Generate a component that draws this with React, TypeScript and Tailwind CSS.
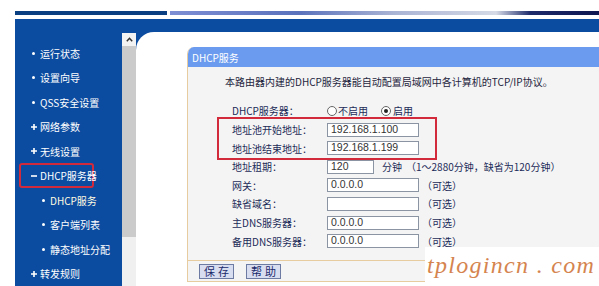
import React from "react";

// ###  Router admin page: DHCP service  ###

type NavItem = {
  label: string;
  mark: "dot" | "plus" | "minus";
  sub?: boolean;
  active?: boolean;
  boxed?: boolean;
};

const navItems: NavItem[] = [
  { label: "运行状态", mark: "dot" },
  { label: "设置向导", mark: "dot" },
  { label: "QSS安全设置", mark: "dot" },
  { label: "网络参数", mark: "plus" },
  { label: "无线设置", mark: "plus" },
  { label: "DHCP服务器", mark: "minus", boxed: true },
  { label: "DHCP服务", mark: "dot", sub: true, active: true },
  { label: "客户端列表", mark: "dot", sub: true },
  { label: "静态地址分配", mark: "dot", sub: true },
  { label: "转发规则", mark: "plus" },
];

function Mark({ type }: { type: NavItem["mark"] }) {
  return (
    <span className="inline-flex w-[7px] justify-center items-center shrink-0">
      {type === "dot" && <span className="w-[3px] h-[3px] rounded-full bg-white" />}
      {type === "plus" && (
        <svg width="6" height="6" viewBox="0 0 6 6">
          <path d="M3 0V6M0 3H6" stroke="#fff" strokeWidth="1.6" />
        </svg>
      )}
      {type === "minus" && (
        <svg width="6" height="6" viewBox="0 0 6 6">
          <path d="M0 3H6" stroke="#fff" strokeWidth="1.6" />
        </svg>
      )}
    </span>
  );
}

function Sidebar() {
  return (
    <nav className="w-[107px] shrink-0 pt-[22px] flex flex-col">
      {navItems.map((item) => (
        <div
          key={item.label}
          className={
            item.boxed
              ? "ml-[4px] w-[75px] h-[25px] pl-[9px] flex items-center border-2 border-[#d22a3a] rounded-[3px]"
              : item.sub
              ? "h-[25px] pl-[25px] flex items-center"
              : "h-[25px] pl-[15px] flex items-center"
          }
        >
          <Mark type={item.mark} />
          <span
            className={
              item.active
                ? "ml-[3px] text-[10px] text-[#fffbe0] whitespace-nowrap"
                : "ml-[3px] text-[10px] text-white whitespace-nowrap"
            }
          >
            {item.label}
          </span>
        </div>
      ))}
    </nav>
  );
}

function Scrollbar() {
  return (
    <div className="w-[14px] shrink-0 flex flex-col mt-[1px]">
      <div className="h-[13px] bg-[#f3f3f3] flex items-center justify-center">
        <svg width="7" height="5" viewBox="0 0 7 5">
          <path d="M0.8 4.2L3.5 1.3L6.2 4.2" stroke="#333" strokeWidth="1.5" fill="none" />
        </svg>
      </div>
      <div className="h-[191px] bg-[#cbcbcb]" />
      <div className="flex-1 bg-[#f0f0f0]" />
    </div>
  );
}

function TextInput({ value, wide = true }: { value: string; wide?: boolean }) {
  return (
    <span
      className={
        (wide ? "w-[92px]" : "w-[47px]") +
        " h-[14px] shrink-0 bg-white border border-[#8a94a3] pl-[3px] flex items-center text-[10.5px] text-[#333] font-['Liberation_Sans',sans-serif]"
      }
    >
      {value}
    </span>
  );
}

function Radio({ checked }: { checked?: boolean }) {
  return (
    <span className="w-[10px] h-[10px] shrink-0 rounded-full border border-[#666] bg-white flex items-center justify-center">
      {checked && <span className="w-[4px] h-[4px] rounded-full bg-[#222]" />}
    </span>
  );
}

function Row({ label, children }: { label: string; children: React.ReactNode }) {
  return (
    <div className="h-[18.6px] flex items-center">
      <span className="w-[95px] shrink-0 text-[10px] text-[#1c2b58] whitespace-nowrap">{label}</span>
      {children}
    </div>
  );
}

const Optional = () => <span className="ml-[3px] text-[10px] text-[#1c2b58] whitespace-nowrap">（可选）</span>;

function DhcpPanel() {
  return (
    <div className="w-[430px] border-l border-b border-[#e6cc9f] rounded-tl-[7px] overflow-hidden">
      <div className="h-[20px] bg-[#6b9bee] pl-[4px] flex items-center text-[10px] text-white">DHCP服务</div>

      <div className="h-[193px] bg-[#f4f4f4] pt-[7px]">
        <p className="pl-[37px] h-[16px] leading-[16px] text-[10px] text-[#1f2640] whitespace-nowrap">
          本路由器内建的DHCP服务器能自动配置局域网中各计算机的TCP/IP协议。
        </p>

        <div className="mt-[11.7px] pl-[44px]">
          <Row label="DHCP服务器：">
            <Radio />
            <span className="ml-[1px] text-[10px] text-[#1c2b58]">不启用</span>
            <span className="ml-[13px]">
              <Radio checked />
            </span>
            <span className="ml-[2px] text-[10px] text-[#1c2b58]">启用</span>
          </Row>

          <div className="-ml-[15px] w-[220px] pl-[13px] -my-[3px] py-[1px] border-2 border-[#d22a3a]">
            <Row label="地址池开始地址：">
              <TextInput value="192.168.1.100" />
            </Row>
            <Row label="地址池结束地址：">
              <TextInput value="192.168.1.199" />
            </Row>
          </div>

          <Row label="地址租期：">
            <TextInput value="120" wide={false} />
            <span className="ml-[8px] text-[10px] text-[#1c2b58] whitespace-nowrap">分钟</span>
            <span className="ml-[4px] text-[10px] text-[#1c2b58] whitespace-nowrap">（1～2880分钟，缺省为120分钟）</span>
          </Row>
          <Row label="网关：">
            <TextInput value="0.0.0.0" />
            <Optional />
          </Row>
          <Row label="缺省域名：">
            <TextInput value="" />
            <Optional />
          </Row>
          <Row label="主DNS服务器：">
            <TextInput value="0.0.0.0" />
            <Optional />
          </Row>
          <Row label="备用DNS服务器：">
            <TextInput value="0.0.0.0" />
            <Optional />
          </Row>
        </div>
      </div>

      <div className="h-[21px] border-t border-[#e6cc9f] bg-[#f4f4f4] pl-[11px] flex items-center gap-[12px]">
        {["保存", "帮助"].map((b) => (
          <button
            key={b}
            className="w-[35px] h-[15px] bg-[#d9ddf0] border border-[#6d7ba3] text-[11px] leading-none text-[#1b2a6b] tracking-[3px] pl-[3px]"
          >
            {b}
          </button>
        ))}
      </div>
    </div>
  );
}

export default function App() {
  return (
    <div className="relative w-[599px] h-[286px] overflow-hidden bg-white font-['Noto_Sans_CJK_SC',sans-serif]">
      {/* top banner edge */}
      <div className="h-[11px]" />
      <div className="h-[4px] flex">
        <div className="w-[15px]" />
        <div className="w-[152px] bg-[#0a3f82]" />
        <div className="w-[3px]" />
        <div className="flex-1 bg-[linear-gradient(90deg,#7d8ed4_0%,#5a72bc_30%,#a9b3d4_52%,#d6dae6_76%,#1d2a6a_84%,#0d1650_100%)]" />
      </div>
      <div className="h-[4px]" />

      <div className="h-[267px] ml-[15px] bg-[#0c4ca0] flex">
        <Sidebar />
        <div className="flex-1 flex flex-col pt-[13px]">
          <div className="flex-1 flex">
            <Scrollbar />
            <div className="flex-1 bg-white rounded-tl-[18px] overflow-hidden pl-[51px] pt-[15px]">
              <DhcpPanel />
            </div>
          </div>
        </div>
      </div>

      {/* site watermark */}
      <div className="absolute left-[425px] top-[247px] w-[174px] h-[39px] bg-white pt-[6px] pl-[2px]">
        <span className="block leading-[24px] text-[24px] italic text-[#d5844f] tracking-[1.3px] whitespace-nowrap font-['Liberation_Serif',serif]">
          tplogincn . com
        </span>
      </div>
    </div>
  );
}
